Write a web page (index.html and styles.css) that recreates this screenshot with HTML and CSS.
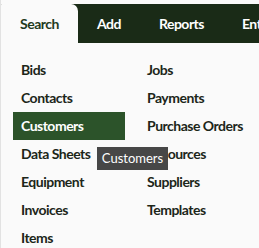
FILE: index.html
```html
<!DOCTYPE html>
<html>
<head>
<meta charset="utf-8">
<link rel="stylesheet" href="styles.css">
</head>
<body>
<div class="page">
  <nav class="tabs">
    <a class="tab active">Search</a>
    <a class="tab">Add</a>
    <a class="tab">Reports</a>
    <a class="tab">Entries</a>
  </nav>
  <div class="menu">
    <a class="item">Bids</a>
    <a class="item">Contacts</a>
    <a class="item selected">Customers</a>
    <a class="item">Data Sheets</a>
    <a class="item">Equipment</a>
    <a class="item">Invoices</a>
    <a class="item">Items</a>
    <a class="item">Jobs</a>
    <a class="item">Payments</a>
    <a class="item">Purchase Orders</a>
    <a class="item">Resources</a>
    <a class="item">Suppliers</a>
    <a class="item">Templates</a>
  </div>
  <div class="tooltip">Customers</div>
</div>
</body>
</html>
```
FILE: styles.css
```css
html, body {
  margin: 0;
  padding: 0;
  background: #fafafa;
}
.page {
  position: relative;
  width: 259px;
  height: 248px;
  overflow: hidden;
  box-sizing: border-box;
  border-left: 1px solid #e2e2e2;
  padding-top: 4px;
  font-family: Lato, "Open Sans", sans-serif;
  font-weight: 700;
  letter-spacing: -0.5px;
}
.tabs {
  display: flex;
  height: 39px;
  background: #1a2b17;
  white-space: nowrap;
  margin-left: -1px;
}
.tab {
  display: flex;
  align-items: center;
  padding: 0 19px 1px;
  color: #ffffff;
  font-size: 14px;
  flex: none;
}
.tab.active {
  background: #fafafa;
  color: #1f3a1e;
  border-left: 1px solid #e2e2e2;
  border-top-right-radius: 7px;
  border-top-left-radius: 2px;
}
.menu {
  display: grid;
  grid-auto-flow: column;
  grid-template-rows: repeat(7, 28px);
  grid-template-columns: 112px 112px;
  column-gap: 14px;
  padding: 13px 0 0 12px;
}
.item {
  display: flex;
  align-items: center;
  padding: 0 0 2px 8px;
  font-size: 14px;
  color: #1c2619;
  white-space: nowrap;
}
.item.selected {
  background: #2c532a;
  color: #ffffff;
}
.tooltip {
  position: absolute;
  left: 96px;
  top: 147px;
  width: 71px;
  height: 23px;
  padding-bottom: 1px;
  box-sizing: border-box;
  background: #474747;
  color: #ffffff;
  font-weight: 400;
  font-size: 13px;
  letter-spacing: 0;
  display: flex;
  align-items: center;
  justify-content: center;
}
```
